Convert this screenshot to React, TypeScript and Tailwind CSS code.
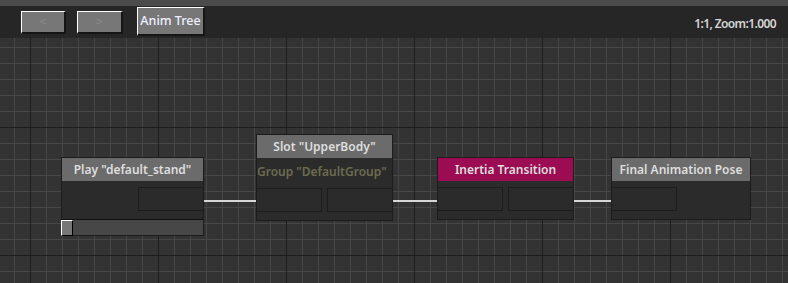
import React from 'react';

const font = "font-['Noto_Sans','DejaVu_Sans',sans-serif]";

function Box({ w = 'w-[66px]' }: { w?: string }) {
  return <div className={`${w} h-[24px] border border-[#1c1c1c] bg-[#2b2b2b]`} />;
}

function Node({
  title,
  header = 'bg-[#6b6b6b]',
  className,
  children,
}: {
  title: string;
  header?: string;
  className: string;
  children?: React.ReactNode;
}) {
  return (
    <div className={`absolute flex flex-col border border-[#1c1c1c] bg-[#2b2b2b] ${className}`}>
      <div className={`h-[23px] flex items-center justify-center whitespace-nowrap text-[12px] font-semibold text-[#dedede] ${header}`}>
        {title}
      </div>
      {children}
    </div>
  );
}

function Wire({ className }: { className: string }) {
  return <div className={`absolute top-[162px] h-[2px] bg-[#d6d6d6] ${className}`} />;
}

export default function App() {
  return (
    <div className={`w-[788px] h-[283px] flex flex-col overflow-hidden bg-[#333333] ${font}`}>
      <div className="h-[6px] bg-[#4b4b4b]" />

      {/* toolbar */}
      <div className="h-[32px] flex items-center bg-[#262626] pl-[21px] pr-[12px]">
        <button className="w-[45px] h-[23px] mt-[1px] flex items-center justify-center bg-[#777777] border-t border-l border-t-white border-l-white border-b-2 border-r-2 border-b-[#151515] border-r-[#151515] text-[12px] text-[#8c8c8c]">
          &lt;
        </button>
        <button className="ml-[11px] w-[46px] h-[23px] mt-[1px] flex items-center justify-center bg-[#777777] border-t border-l border-t-white border-l-white border-b-2 border-r-2 border-b-[#151515] border-r-[#151515] text-[12px] text-[#8c8c8c]">
          &gt;
        </button>
        <button className="ml-[14px] w-[68px] h-[29px] -mt-[1px] flex items-center justify-center bg-[#777777] border-t border-l border-t-white border-l-white border-b-2 border-r-2 border-b-[#151515] border-r-[#151515] text-[12.5px] font-medium text-[#eef0ff]">
          Anim Tree
        </button>
        <span className="ml-auto mt-[3px] text-[12px] font-semibold tracking-[-0.6px] text-[#d6d6d6]">1:1, Zoom:1.000</span>
      </div>

      {/* graph canvas */}
      <div className="relative flex-1 bg-[#333333] [background-image:linear-gradient(to_right,#1d1d1d_1px,transparent_1px),linear-gradient(to_bottom,#1d1d1d_1px,transparent_1px),linear-gradient(to_right,#474747_1px,transparent_1px),linear-gradient(to_bottom,#474747_1px,transparent_1px)] [background-size:128px_128px,128px_128px,16px_16px,16px_16px] [background-position:30px_89px,30px_89px,14px_9px,14px_9px]">
        <Wire className="left-[204px] w-[52px]" />
        <Wire className="left-[393px] w-[44px]" />
        <Wire className="left-[574px] w-[37px]" />

        <Node title='Play "default_stand"' className="left-[61px] top-[119px] w-[143px]">
          <div className="flex justify-end pt-[6px] pb-[8px] -mr-px">
            <Box />
          </div>
          <div className="h-[16px] border-t border-[#111111] bg-[#474747] -ml-px flex">
            <div className="w-[12px] h-[16px] bg-[#777777] border-t border-l border-t-white border-l-white border-b border-r border-b-black border-r-black" />
          </div>
        </Node>

        <Node title='Slot "UpperBody"' className="left-[256px] top-[96px] w-[137px]">
          <div className="h-[30px] pt-[4px] whitespace-nowrap text-[12px] font-semibold text-[#6c6b51] leading-[20px]">Group "DefaultGroup"</div>
          <div className="flex justify-between pb-[8px] -mx-px">
            <Box />
            <Box />
          </div>
        </Node>

        <Node title="Inertia Transition" header="bg-[#9b0c52]" className="left-[437px] top-[119px] w-[137px]">
          <div className="flex justify-between pt-[6px] pb-[8px] -mx-px">
            <Box />
            <Box />
          </div>
        </Node>

        <Node title="Final Animation Pose" className="left-[611px] top-[119px] w-[140px]">
          <div className="flex pt-[6px] pb-[8px] -ml-px">
            <Box />
          </div>
        </Node>
      </div>
    </div>
  );
}
